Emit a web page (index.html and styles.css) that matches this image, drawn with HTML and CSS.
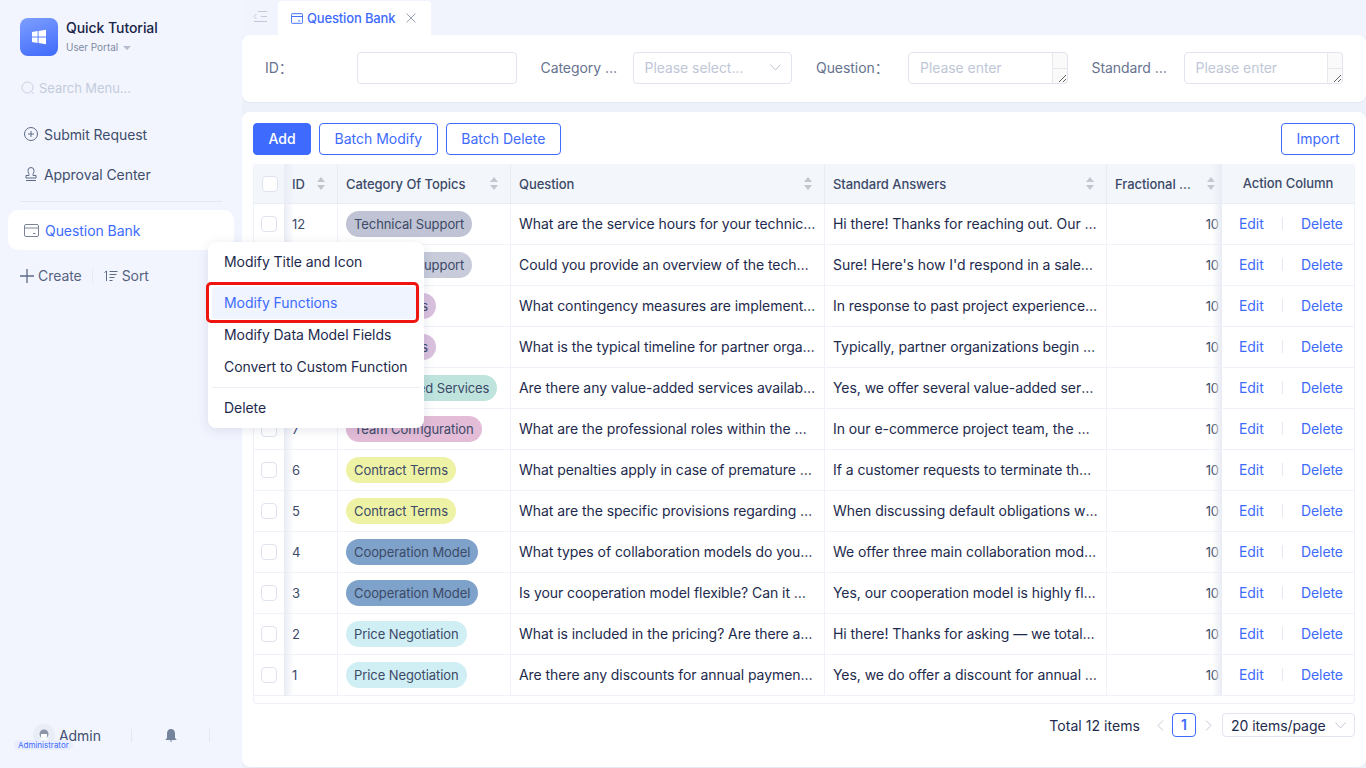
FILE: index.html
```html
<!DOCTYPE html>
<html lang="zh-CN">
<head>
<title>Question Bank</title>
<link rel="stylesheet" href="styles.css">
</head>
<body>
<div class="app">
  <aside class="sidebar">
    <div class="brand">
      <div class="logo">
        <svg width="16" height="16" viewBox="0 0 16 16"><path fill="#fff" d="M1 3l5.6-.9v5.4H1zM7.6 2l7.4-1.2v6.7H7.6zM1 8.5h5.6v5.4L1 13zM7.6 8.5H15v6.7L7.6 14z"/></svg>
      </div>
      <div class="brand_text">
        <div class="brand_title">Quick Tutorial</div>
        <div class="brand_sub">User Portal <span class="caret"></span></div>
      </div>
    </div>
    <div class="search">
      <svg width="14" height="14" viewBox="0 0 14 14" fill="none" stroke="#c9d0df"><circle cx="6.5" cy="6.5" r="5.5"/><path d="M10.5 10.5l2.5 2.5"/></svg>
      Search Menu...
    </div>
    <a class="nav_item">
      <svg width="14" height="14" viewBox="0 0 14 14" fill="none" stroke="#5d6b85"><circle cx="7" cy="7" r="6.5"/><path d="M7 4v6M4 7h6"/></svg>
      Submit Request
    </a>
    <a class="nav_item">
      <svg width="14" height="14" viewBox="0 0 14 14" fill="none" stroke="#5d6b85"><path d="M5 7.500c0-1-1-2-1-4a3 3 0 016 0c0 2-1 3-1 4v1h3v2.500H2V8.500h3zM2 13.500h10"/></svg>
      Approval Center
    </a>
    <div class="side_line"></div>
    <a class="nav_item active">
      <svg width="15" height="13" viewBox="0 0 15 13" fill="none" stroke="#7b8496"><rect x=".5" y=".5" width="14" height="12" rx="1.500"/><path d="M.5 4h14M9 9.500h2.500"/></svg>
      Question Bank
    </a>
    <div class="side_tools">
      <span class="tool">
        <svg width="14" height="14" viewBox="0 0 14 14" fill="none" stroke="#5d6b85" stroke-width="1.300"><path d="M7 0v14M0 7h14"/></svg>
        Create
      </span>
      <span class="tool_line"></span>
      <span class="tool">
        <svg width="14" height="12" viewBox="0 0 14 12" fill="none" stroke="#5d6b85"><path d="M.5 2.500L2.500 1v10M5.500 1.500h8M5.500 4.500h7M5.500 7.500h5M5.500 10.500h3"/></svg>
        Sort
      </span>
    </div>
    <div class="side_footer">
      <div class="avatar">
        <svg width="22" height="22" viewBox="0 0 22 22"><circle cx="11" cy="11" r="11" fill="#e9edf5"/><circle cx="11" cy="10" r="4.500" fill="#8c96a8"/><path fill="#fff" d="M7 22c-.5-6 1-9 4-9s4.500 3 4 9z"/><path fill="#fff" d="M8 10h6v2a3 3 0 01-6 0z"/></svg>
        <span class="role">Administrator</span>
      </div>
      <span class="admin_name">Admin</span>
      <span class="foot_line"></span>
      <svg class="bell" width="12" height="13" viewBox="0 0 12 13"><path fill="#75849c" d="M6 0c2.500 0 4 2 4 4.500V9l1.500 1.500v.5H.5v-.5L2 9V4.500C2 2 3.500 0 6 0zM4.500 11.500h3L6 13z"/></svg>
      <span class="foot_line"></span>
    </div>
  </aside>

  <main class="main">
    <div class="tabs">
      <svg class="collapse" width="14" height="11" viewBox="0 0 14 11" fill="none" stroke="#c3c9d6"><path d="M5 .5h9M8 5.500h6M1 10.500h13M3.500 3L1 5.500 3.500 8"/></svg>
      <div class="tab">
        <svg width="12" height="11" viewBox="0 0 15 13" fill="none" stroke="#3e6bfd" stroke-width="1.200"><rect x=".5" y=".5" width="14" height="12" rx="1"/><path d="M.5 4h14M9 9.500h2.500"/></svg>
        <span>Question Bank</span>
        <svg class="tab_close" width="10" height="10" viewBox="0 0 10 10" fill="none" stroke="#9aa3b5"><path d="M.5.5l9 9M9.500.5l-9 9"/></svg>
      </div>
    </div>

    <section class="card filter">
      <div class="field">
        <label>ID：</label>
        <input class="control" type="text">
      </div>
      <div class="field">
        <label>Category of Topics</label>
        <div class="control select">
          <span>Please select...</span>
          <svg width="11" height="7" viewBox="0 0 11 7" fill="none" stroke="#bcc3d2"><path d="M.5.5l5 5.500 5-5.500"/></svg>
        </div>
      </div>
      <div class="field">
        <label>Question：</label>
        <div class="area_wrap"><textarea class="control area" rows="1" placeholder="Please enter"></textarea></div>
      </div>
      <div class="field">
        <label>Standard Answers</label>
        <div class="area_wrap"><textarea class="control area" rows="1" placeholder="Please enter"></textarea></div>
      </div>
    </section>

    <section class="card list">
      <div class="toolbar">
        <button class="btn primary">Add</button>
        <button class="btn">Batch Modify</button>
        <button class="btn">Batch Delete</button>
        <button class="btn import">Import</button>
      </div>
      <div class="table_wrap">
        <table>
          <colgroup>
            <col class="c_check"><col class="c_id"><col class="c_cat"><col class="c_q"><col class="c_a"><col class="c_f"><col class="c_act">
          </colgroup>
          <thead>
            <tr>
              <th class="fix_l"><span class="check"></span></th>
              <th><div class="th_in"><span>ID</span><i class="sort"></i></div></th>
              <th><div class="th_in"><span>Category Of Topics</span><i class="sort"></i></div></th>
              <th><div class="th_in"><span>Question</span><i class="sort"></i></div></th>
              <th><div class="th_in"><span>Standard Answers</span><i class="sort"></i></div></th>
              <th><div class="th_in wide"><span>Fractional Value</span><i class="sort"></i></div></th>
              <th class="fix_r act_head">Action Column</th>
            </tr>
          </thead>
          <tbody>
            <tr>
              <td class="fix_l"><span class="check"></span></td><td>12</td>
              <td><span class="tag grey">Technical Support</span></td>
              <td>What are the service hours for your technical support team?</td>
              <td>Hi there! Thanks for reaching out. Our support team is available</td>
              <td class="num">10</td>
              <td class="fix_r"><div class="acts"><a>Edit</a><i></i><a>Delete</a></div></td>
            </tr>
            <tr>
              <td class="fix_l"><span class="check"></span></td><td>11</td>
              <td><span class="tag grey2">Technical Support</span></td>
              <td>Could you provide an overview of the technical support process?</td>
              <td>Sure! Here's how I'd respond in a sales conversation about this</td>
              <td class="num">10</td>
              <td class="fix_r"><div class="acts"><a>Edit</a><i></i><a>Delete</a></div></td>
            </tr>
            <tr>
              <td class="fix_l"><span class="check"></span></td><td>10</td>
              <td><span class="tag purple">Past Results</span></td>
              <td>What contingency measures are implemented for project delays?</td>
              <td>In response to past project experience, we have built several</td>
              <td class="num">10</td>
              <td class="fix_r"><div class="acts"><a>Edit</a><i></i><a>Delete</a></div></td>
            </tr>
            <tr>
              <td class="fix_l"><span class="check"></span></td><td>9</td>
              <td><span class="tag purple">Past Results</span></td>
              <td>What is the typical timeline for partner organizations to launch?</td>
              <td>Typically, partner organizations begin to see results within weeks</td>
              <td class="num">10</td>
              <td class="fix_r"><div class="acts"><a>Edit</a><i></i><a>Delete</a></div></td>
            </tr>
            <tr>
              <td class="fix_l"><span class="check"></span></td><td>8</td>
              <td><span class="tag teal">Value-Added Services</span></td>
              <td>Are there any value-added services available to our customers?</td>
              <td>Yes, we offer several value-added services for our customers</td>
              <td class="num">10</td>
              <td class="fix_r"><div class="acts"><a>Edit</a><i></i><a>Delete</a></div></td>
            </tr>
            <tr>
              <td class="fix_l"><span class="check"></span></td><td>7</td>
              <td><span class="tag pink">Team Configuration</span></td>
              <td>What are the professional roles within the whole project team?</td>
              <td>In our e-commerce project team, the main roles include several</td>
              <td class="num">10</td>
              <td class="fix_r"><div class="acts"><a>Edit</a><i></i><a>Delete</a></div></td>
            </tr>
            <tr>
              <td class="fix_l"><span class="check"></span></td><td>6</td>
              <td><span class="tag yellow">Contract Terms</span></td>
              <td>What penalties apply in case of premature termination of the contract?</td>
              <td>If a customer requests to terminate the contract ahead of time</td>
              <td class="num">10</td>
              <td class="fix_r"><div class="acts"><a>Edit</a><i></i><a>Delete</a></div></td>
            </tr>
            <tr>
              <td class="fix_l"><span class="check"></span></td><td>5</td>
              <td><span class="tag yellow">Contract Terms</span></td>
              <td>What are the specific provisions regarding default and liability?</td>
              <td>When discussing default obligations with a client, we usually</td>
              <td class="num">10</td>
              <td class="fix_r"><div class="acts"><a>Edit</a><i></i><a>Delete</a></div></td>
            </tr>
            <tr>
              <td class="fix_l"><span class="check"></span></td><td>4</td>
              <td><span class="tag blue">Cooperation Model</span></td>
              <td>What types of collaboration models do you support for partners?</td>
              <td>We offer three main collaboration models for our partners today</td>
              <td class="num">10</td>
              <td class="fix_r"><div class="acts"><a>Edit</a><i></i><a>Delete</a></div></td>
            </tr>
            <tr>
              <td class="fix_l"><span class="check"></span></td><td>3</td>
              <td><span class="tag blue">Cooperation Model</span></td>
              <td>Is your cooperation model flexible? Can it work over a longer time?</td>
              <td>Yes, our cooperation model is highly flexible and can be adjusted</td>
              <td class="num">10</td>
              <td class="fix_r"><div class="acts"><a>Edit</a><i></i><a>Delete</a></div></td>
            </tr>
            <tr>
              <td class="fix_l"><span class="check"></span></td><td>2</td>
              <td><span class="tag cyan">Price Negotiation</span></td>
              <td>What is included in the pricing? Are there any additional fees?</td>
              <td>Hi there! Thanks for asking — we totally understand that pricing</td>
              <td class="num">10</td>
              <td class="fix_r"><div class="acts"><a>Edit</a><i></i><a>Delete</a></div></td>
            </tr>
            <tr>
              <td class="fix_l"><span class="check"></span></td><td>1</td>
              <td><span class="tag cyan">Price Negotiation</span></td>
              <td>Are there any discounts for annual payment plans or long contracts?</td>
              <td>Yes, we do offer a discount for annual plans and long contracts</td>
              <td class="num">10</td>
              <td class="fix_r"><div class="acts"><a>Edit</a><i></i><a>Delete</a></div></td>
            </tr>
          </tbody>
        </table>
      </div>
      <div class="pager">
        <span class="total">Total 12 items</span>
        <svg width="7" height="11" viewBox="0 0 7 11" fill="none" stroke="#c3c9d6"><path d="M6 .5l-5 5 5 5"/></svg>
        <span class="page_no">1</span>
        <svg width="7" height="11" viewBox="0 0 7 11" fill="none" stroke="#c3c9d6"><path d="M1 .5l5 5-5 5"/></svg>
        <div class="page_size">
          <span>20 items/page</span>
          <svg width="11" height="7" viewBox="0 0 11 7" fill="none" stroke="#c3c9d6"><path d="M.5.5l5 5.500 5-5.500"/></svg>
        </div>
      </div>
    </section>
  </main>
</div>

<div class="menu">
  <div class="menu_item">Modify Title and Icon</div>
  <div class="menu_item current">Modify Functions</div>
  <div class="menu_item">Modify Data Model Fields</div>
  <div class="menu_item">Convert to Custom Function</div>
  <div class="menu_line"></div>
  <div class="menu_item">Delete</div>
</div>
<div class="red_box"></div>
</body>
</html>
```

FILE: styles.css
```css
* {
  box-sizing: border-box;
}

body {
  margin: 0;
  height: 100vh;
  overflow: hidden;
  font-family: Inter, "Noto Sans CJK SC", "Liberation Sans", sans-serif;
  font-size: 14px;
  letter-spacing: -0.06px;
  color: #1d2a4d;
  background-color: #edf1f9;
}

.app {
  display: flex;
  height: 100%;
}

/* sidebar */
.sidebar {
  width: 242px;
  flex-shrink: 0;
  display: flex;
  flex-direction: column;
  background-color: #f2f5fe;
  padding: 18px 8px 0;
}

.brand {
  display: flex;
  align-items: center;
  gap: 8px;
  padding-left: 12px;
}

.logo {
  width: 38px;
  height: 38px;
  border-radius: 8px;
  background: linear-gradient(160deg, #7d9fff, #3f69fb);
  display: flex;
  align-items: center;
  justify-content: center;
}

.brand_text {
  padding-bottom: 2px;
}

.brand_title {
  font-weight: 500;
  color: #182448;
  line-height: 20px;
}

.brand_sub {
  font-size: 10px;
  color: #7f8ba3;
  line-height: 14px;
  margin-top: 2px;
}

.caret {
  display: inline-block;
  border: 4px solid transparent;
  border-top: 4px solid #b4bccd;
  border-bottom: 0;
  margin-left: 2px;
  vertical-align: 1px;
}

.search {
  display: flex;
  align-items: center;
  gap: 4px;
  color: #c4cbdb;
  font-size: 13px;
  padding-left: 13px;
  margin-top: 22px;
  height: 20px;
}

.nav_item {
  display: flex;
  align-items: center;
  gap: 6px;
  height: 40px;
  color: #404e6d;
  padding-left: 16px;
}

.search + .nav_item {
  margin-top: 16px;
}

.side_line {
  height: 1px;
  margin: 7px 12px 8px;
  background-color: #e4e8f2;
}

.nav_item.active {
  background-color: #fff;
  border-radius: 10px;
  color: #3e6bfd;
}

.side_tools {
  display: flex;
  align-items: center;
  margin-top: 17px;
  padding-left: 12px;
  color: #56637f;
}

.tool {
  display: flex;
  align-items: center;
  gap: 4px;
}

.tool_line {
  width: 1px;
  height: 14px;
  margin: 0 11px 0 10px;
  background-color: #e4e8f2;
}

.side_footer {
  display: flex;
  align-items: center;
  margin-top: auto;
  margin-bottom: 21px;
  padding-left: 25px;
  color: #404e6d;
  height: 24px;
}

.avatar {
  position: relative;
  width: 22px;
  height: 22px;
}

.role {
  position: absolute;
  left: -19px;
  top: 16px;
  padding: 0 4px;
  height: 10px;
  line-height: 10px;
  font-size: 8px;
  letter-spacing: 0;
  color: #3e6bfd;
  background-color: #e9eefe;
  border-radius: 5px;
}

.admin_name {
  margin-left: 4px;
  width: 72px;
}

.foot_line {
  width: 1px;
  height: 13px;
  background-color: #e4e8f2;
}

.bell {
  margin: 0 32px 0 33px;
}

/* main area */
.main {
  flex: 1;
  min-width: 0;
  display: flex;
  flex-direction: column;
  background-color: #edf1f9;
}

.tabs {
  display: flex;
  align-items: flex-end;
  height: 35px;
  background-color: #f1f4fc;
  flex-shrink: 0;
}

.collapse {
  margin: 0 0 13px 11px;
}

.tab {
  display: flex;
  align-items: center;
  height: 34px;
  margin-left: 11px;
  width: 153px;
  padding-left: 13px;
  background-color: #fff;
  border-radius: 4px 4px 0 0;
  color: #3e6bfd;
  font-size: 13px;
  font-weight: 500;
  letter-spacing: -0.15px;
}

.tab span {
  margin-left: 4px;
}

.tab_close {
  margin-left: 11px;
}

.card {
  background-color: #fff;
  border-radius: 8px;
  box-shadow: 0 1px 0 #e5e9f3;
}

.filter {
  height: 67px;
  flex-shrink: 0;
  display: grid;
  grid-template-columns: repeat(4, 1fr);
  column-gap: 24px;
  padding: 0 23px 1px;
  align-items: center;
}

.field {
  display: flex;
  align-items: center;
  min-width: 0;
}

.field label {
  width: 92px;
  height: 21px;
  flex-shrink: 0;
  padding-right: 8px;
  line-height: 20px;
  color: #66738f;
  overflow: hidden;
  white-space: nowrap;
  text-overflow: ellipsis;
}

.control {
  flex: 1;
  min-width: 0;
  height: 32px;
  border: 1px solid #e1e5f0;
  border-radius: 4px;
  background-color: #fff;
  font-family: inherit;
  font-size: 14px;
  letter-spacing: inherit;
  padding: 0 11px;
}

.select {
  display: flex;
  align-items: center;
  justify-content: space-between;
  color: #c0c7d7;
  padding: 0 10px 1px 11px;
}

/* scrollbar track is painted on the wrapper, the textarea sits on top of it */
.area_wrap {
  flex: 1;
  min-width: 0;
  height: 32px;
  border-radius: 4px;
  background:
    linear-gradient(#e6e8ee, #e6e8ee) right 15px bottom 0 / 1px 100% no-repeat,
    linear-gradient(#e6e8ee, #e6e8ee) right 0 bottom 15px / 15px 1px no-repeat,
    linear-gradient(#fafafa, #fafafa) right 0 top 0 / 15px 100% no-repeat;
}

.area {
  display: block;
  width: 100%;
  padding-top: 5px;
  line-height: 20px;
  background-color: transparent;
  overflow: hidden;
  resize: both;
  outline: none;
}

.area::placeholder {
  color: #c0c7d7;
}

.list {
  flex: 1;
  margin-top: 10px;
  margin-bottom: 1px;
  padding: 11px 11px 0;
  display: flex;
  flex-direction: column;
  min-height: 0;
}

.toolbar {
  display: flex;
  gap: 8px;
  margin-bottom: 9px;
}

.btn {
  height: 32px;
  padding: 0 14.5px 2px;
  border: 1px solid #3e6bfd;
  border-radius: 4px;
  background-color: #fff;
  color: #3e6bfd;
  font-family: inherit;
  font-size: 14px;
}

.btn.primary {
  background-color: #3e6bfd;
  color: #fff;
  font-weight: 500;
  width: 58px;
  padding: 0 0 2px;
}

.btn.import {
  margin-left: auto;
}

/* table */
.table_wrap {
  height: 540px;
  border: 1px solid #eef1f8;
  border-top: 0;
  border-radius: 4px;
  flex-shrink: 0;
}

table {
  width: 1100px;
  table-layout: fixed;
  border-collapse: separate;
  border-spacing: 0;
}

.c_check { width: 30px; }
.c_id { width: 54px; }
.c_cat { width: 173px; }
.c_q { width: 314px; }
.c_a { width: 282px; }
.c_f { width: 115px; }
.c_act { width: 132px; }

th {
  height: 40px;
  padding: 0 8px;
  background-color: #f3f6fb;
  color: #3c4a68;
  font-size: 13px;
  font-weight: 500;
  text-align: left;
  border-bottom: 1px solid #e8ecf5;
  border-right: 1px solid #e8ecf5;
}

.th_in {
  display: flex;
  align-items: center;
  justify-content: space-between;
}

.th_in.wide {
  margin-right: -6px;
}

.th_in span {
  overflow: hidden;
  white-space: nowrap;
  text-overflow: ellipsis;
  padding-right: 8px;
}

.sort {
  flex-shrink: 0;
  width: 9px;
  height: 13px;
  margin-right: 3px;
  position: relative;
}

.sort::before,
.sort::after {
  content: "";
  position: absolute;
  left: 0;
  border: 4.500px solid transparent;
}

.sort::before {
  top: 0;
  border-top: 0;
  border-bottom: 5px solid #c2c6ce;
}

.sort::after {
  bottom: 0;
  border-bottom: 0;
  border-top: 5px solid #c2c6ce;
}

td {
  height: 41px;
  padding: 0 8px 1px;
  color: #1d2a4d;
  border-bottom: 1px solid #eff2f8;
  border-right: 1px solid #eff2f8;
  overflow: hidden;
  white-space: nowrap;
  text-overflow: ellipsis;
}

tbody tr td:nth-child(2) {
  color: #3c4a68;
  font-size: 13px;
}

.fix_l {
  padding: 0 0 0 8px;
  border-right: 0;
  position: relative;
  overflow: visible;
}

td.fix_l {
  padding-left: 7px;
}

th.fix_l::after,
td.fix_l::after {
  content: "";
  position: absolute;
  top: 0;
  bottom: -1px;
  right: -10px;
  width: 10px;
  background: linear-gradient(90deg, #e9ecf4, rgba(255, 255, 255, 0));
}

.fix_r {
  padding: 0 0 1px;
  border-right: 0;
  position: relative;
  overflow: visible;
}

th.fix_r::before,
td.fix_r::before {
  content: "";
  position: absolute;
  top: 0;
  bottom: -1px;
  left: -10px;
  width: 10px;
  background: linear-gradient(270deg, #e9ecf4, rgba(255, 255, 255, 0));
}

.act_head {
  text-align: center;
  padding-right: 0;
}

.check {
  display: block;
  width: 16px;
  height: 16px;
  border: 1px solid #dfe3ef;
  border-radius: 4px;
  background-color: #fff;
}

.tag {
  display: inline-block;
  height: 26px;
  line-height: 26px;
  padding: 0 8px;
  border-radius: 13px;
  font-size: 13px;
  letter-spacing: -0.08px;
  color: #3c4a68;
  vertical-align: middle;
}

.grey { background-color: #bfc3d3; }
.grey2 { background-color: #c7cbda; }
.purple { background-color: #d9c1de; }
.teal { background-color: #bfe3dd; }
.pink { background-color: #e3bcd7; }
.yellow { background-color: #eef2a5; }
.blue { background-color: #7ea2c9; }
.cyan { background-color: #d0eff4; }

.num {
  text-align: right;
  padding-right: 2px;
  color: #3c4a68;
  font-size: 13px;
}

.acts {
  display: flex;
  align-items: center;
  justify-content: space-between;
  padding: 0 11px 0 17px;
  color: #3e6bfd;
}

.acts i {
  width: 1px;
  height: 13px;
  background-color: #e4e8f2;
}

/* pagination */
.pager {
  display: flex;
  align-items: center;
  justify-content: flex-end;
  margin-top: 9px;
  color: #1d2a4d;
}

.total {
  margin-right: 17px;
  letter-spacing: 0.05px;
}

.page_no {
  width: 24px;
  height: 24px;
  margin: 0 9px 0 8px;
  line-height: 22px;
  text-align: center;
  border: 1px solid #3e6bfd;
  border-radius: 4px;
  color: #3e6bfd;
  font-weight: 600;
}

.page_size {
  display: flex;
  align-items: center;
  justify-content: space-between;
  width: 133px;
  height: 24px;
  margin-left: 10px;
  padding: 0 8px;
  border: 1px solid #e1e5f0;
  border-radius: 4px;
}

/* context menu */
.menu {
  position: absolute;
  left: 208px;
  top: 242px;
  width: 216px;
  padding: 4px;
  background-color: #fff;
  border-radius: 8px;
  box-shadow: 0 2px 12px rgba(40, 60, 110, 0.12);
}

.menu_item {
  height: 32px;
  line-height: 32px;
  padding-left: 12px;
  border-radius: 4px;
  color: #1d2a4d;
}

.menu_item.current {
  margin-top: 9px;
  background-color: #f0f4ff;
  color: #3e6bfd;
}

.menu_line {
  height: 1px;
  margin: 4px 0;
  background-color: #eceff5;
}

.red_box {
  position: absolute;
  left: 206px;
  top: 282px;
  width: 213px;
  height: 41px;
  border: 3px solid #ee1410;
  border-radius: 5px;
}
```
